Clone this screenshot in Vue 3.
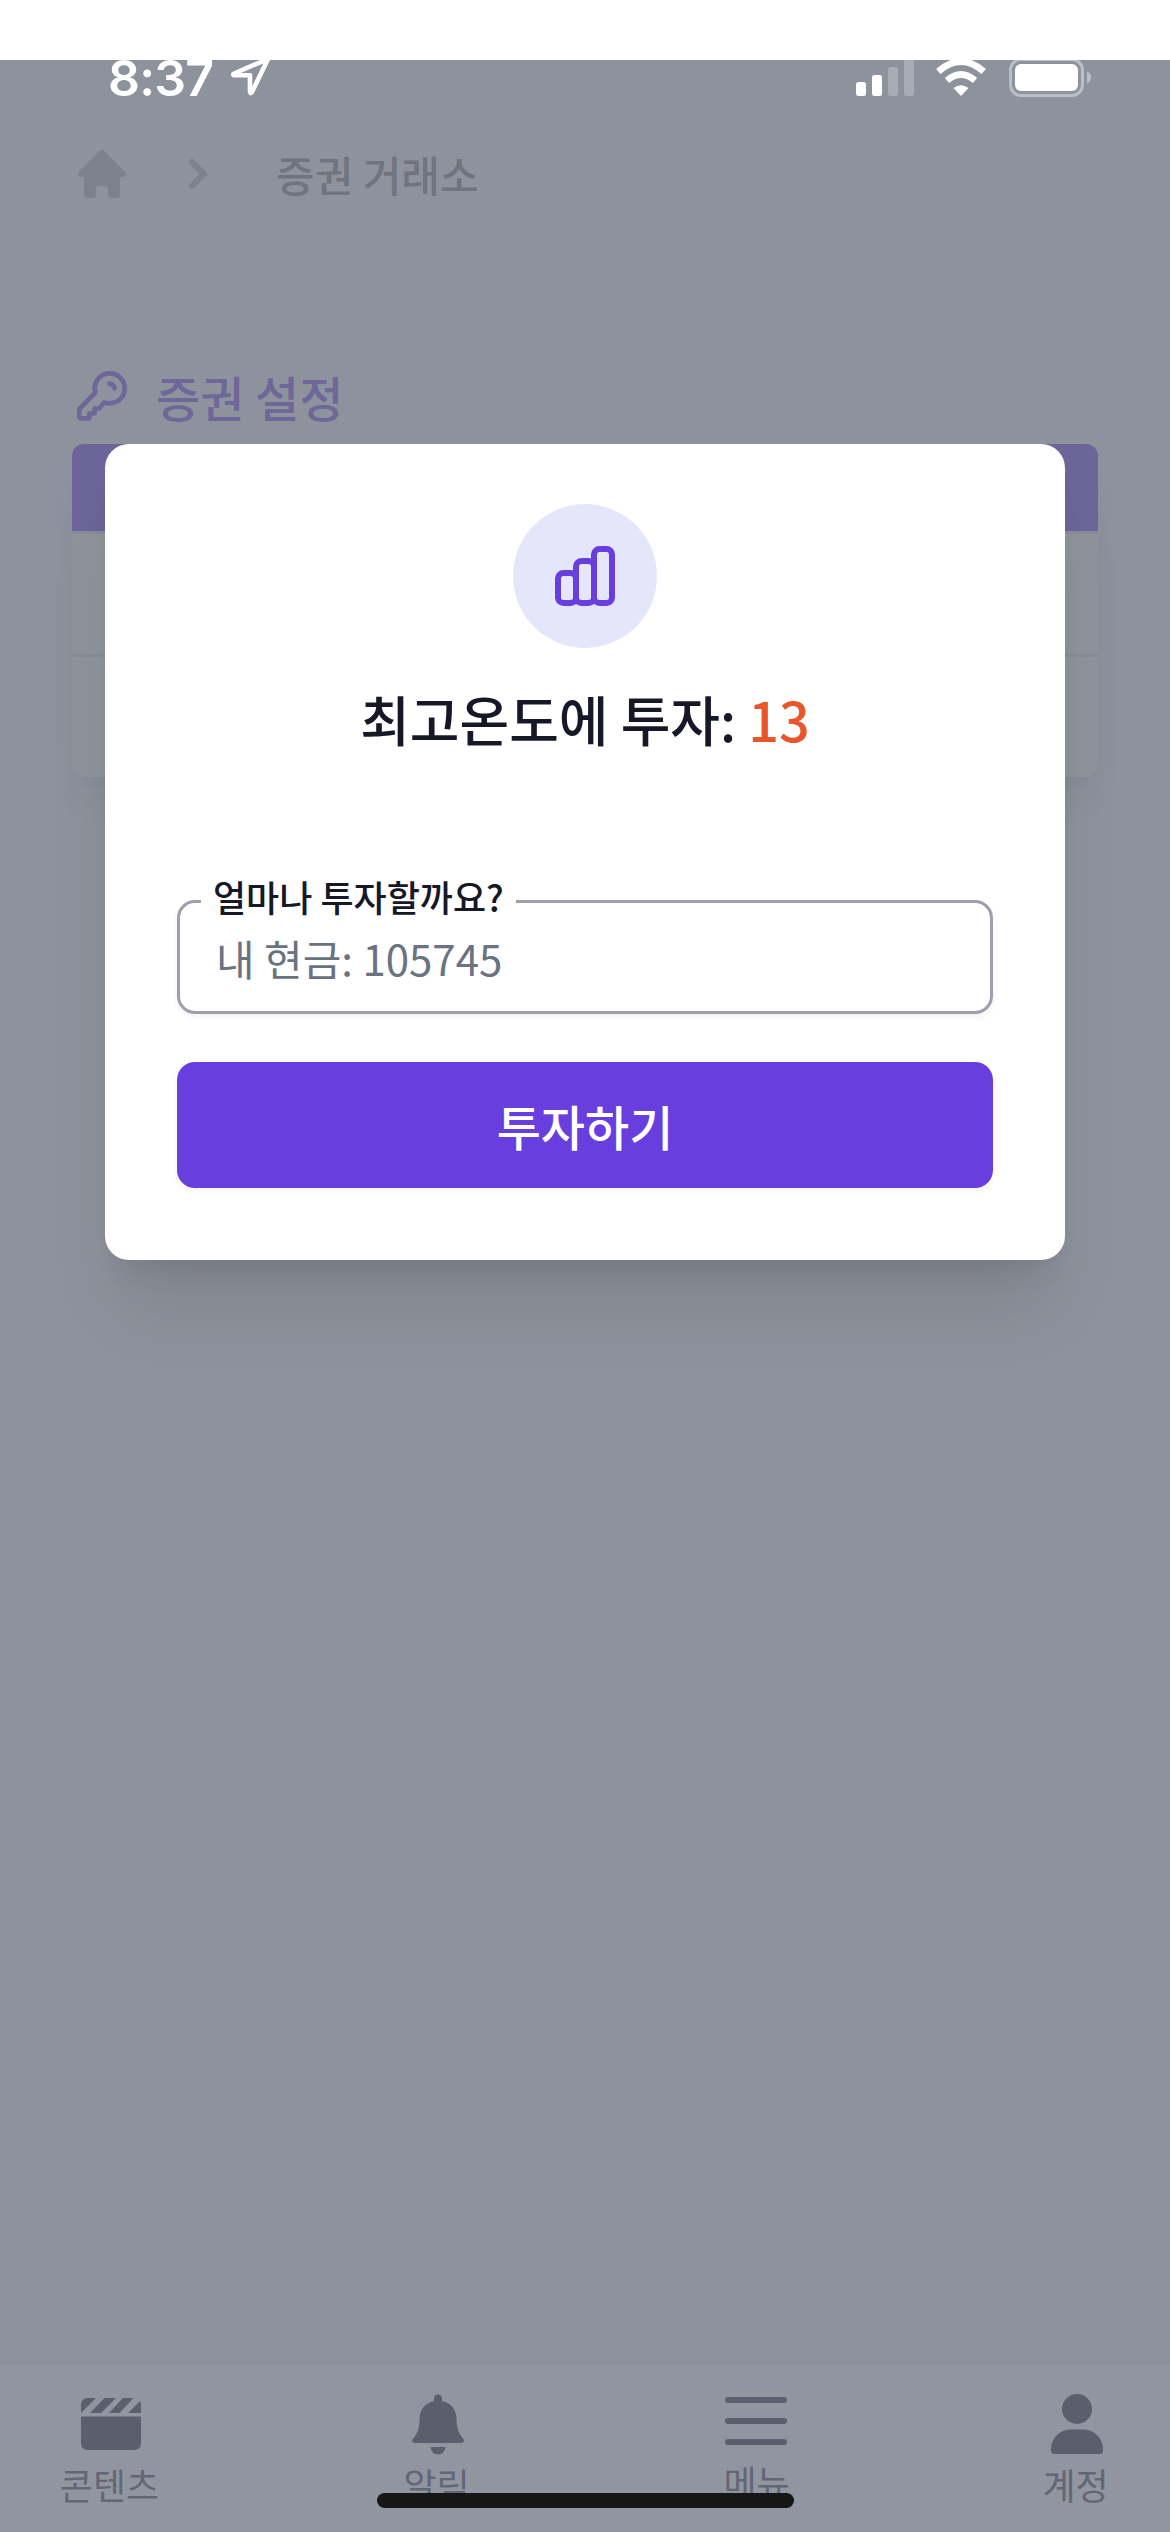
<script setup>
const tabs = [
  { id: 'contents', label: '콘텐츠' },
  { id: 'alarm', label: '알림' },
  { id: 'menu', label: '메뉴' },
  { id: 'account', label: '계정' },
]
</script>

<template>
  <div class="page">
    <div class="top-strip"></div>
    <div class="screen">
      <header class="status">
        <span class="clock">8:37</span>
        <svg class="location" viewBox="0 0 42 42"><path d="M38 3 4 17.500q-1.800 1 0 1.800H20V36q.6 2.200 2 0Z" fill="none" stroke="#fff" stroke-width="4.600" stroke-linejoin="round" /></svg>
        <svg class="signal" viewBox="0 0 58 42">
          <rect x="0" y="28" width="10" height="14" rx="2.500" fill="#fff" />
          <rect x="16" y="21" width="10" height="21" rx="2.500" fill="#fff" />
          <rect x="32" y="13" width="10" height="29" rx="2.500" fill="#a8acb5" />
          <rect x="48" y="3" width="10" height="39" rx="2.500" fill="#a8acb5" />
        </svg>
        <svg class="wifi" viewBox="0 0 50 38">
          <path d="M25 38 17.500 29.900Q25 24.500 32.500 29.900Z" fill="#fff" />
          <path d="M11 22.500Q25 10.500 39 22.500" fill="none" stroke="#fff" stroke-width="6.600" />
          <path d="M2.300 13.500Q25-6.500 47.700 13.500" fill="none" stroke="#fff" stroke-width="6.600" />
        </svg>
        <svg class="battery" viewBox="0 0 82 39">
          <rect x="1.500" y="1.500" width="72" height="36" rx="10.500" fill="none" stroke="#bbbec6" stroke-width="3" />
          <rect x="6" y="6" width="63" height="27" rx="6" fill="#fff" />
          <path d="M78 13.500q4 1.800 4 6t-4 6z" fill="#bbbec6" />
        </svg>
      </header>

      <nav class="crumbs">
        <svg viewBox="0 0 20 20" class="icon home"><path d="M9.293 2.293a1 1 0 011.414 0l7 7A1 1 0 0117 11h-1v6a1 1 0 01-1 1h-2a1 1 0 01-1-1v-2a1 1 0 00-1-1H9a1 1 0 00-1 1v2a1 1 0 01-1 1H5a1 1 0 01-1-1v-6H3a1 1 0 01-.707-1.707l7-7z" /></svg>
        <svg viewBox="0 0 20 20" class="icon chevron"><path d="M7.293 14.707a1 1 0 010-1.414L10.586 10 7.293 6.707a1 1 0 011.414-1.414l4 4a1 1 0 010 1.414l-4 4a1 1 0 01-1.414 0z" /></svg>
        <span class="crumb">증권 거래소</span>
      </nav>

      <div class="heading">
        <svg class="key" viewBox="66 78 180 180" fill="none" stroke="#6f6699" stroke-width="14" stroke-linejoin="round" stroke-linecap="round">
          <path d="M136 158A45 45 0 1 1 163 187L147 206H134V220H118V235H95Q88 235 88 228V211Q88 207 91 204Z" />
          <path d="M178 130Q191 132 194 145" />
        </svg>
        <h2>증권 설정</h2>
      </div>

      <section class="table">
        <div class="table-head"></div>
        <div class="table-row"></div>
        <div class="table-row"></div>
      </section>

      <footer class="tabs">
        <a v-for="tab in tabs" :key="tab.id" class="tab" :class="tab.id">
          <svg v-if="tab.id === 'contents'" class="tab-icon" viewBox="0 0 72 72">
            <path d="M6 28.500H66V55q0 7-7 7H13q-7 0-7-7Z" />
            <path d="M13 10h8L6 25V17q0-7 7-7ZM29.500 10H41L26 25H15ZM48 10h10.500L44.500 25H34ZM65 13l1 3v9H53Z" />
          </svg>
          <svg v-else-if="tab.id === 'alarm'" class="tab-icon" viewBox="0 0 72 72">
            <path d="M36 6.500q3.600 0 4 3.600v3q14.500 3.500 14.500 18.500 0 12 6 18.500 2 2.200 1.600 3-.6 2-3 2H13q-2.600 0-3-2-.4-1 1.600-3 6-6.500 6-18.500Q17.600 16.500 32 13.100v-3q.4-3.600 4-3.600Z" />
            <path d="M28.500 59h15q-1 7.500-7.500 7.500T28.500 59Z" />
          </svg>
          <svg v-else-if="tab.id === 'menu'" class="tab-icon" viewBox="0 0 72 72">
            <rect x="5" y="9" width="62" height="6" rx="3" />
            <rect x="5" y="30" width="62" height="6" rx="3" />
            <rect x="5" y="51" width="62" height="6" rx="3" />
          </svg>
          <svg v-else class="tab-icon" viewBox="0 0 72 72">
            <circle cx="36" cy="21" r="15" />
            <path d="M30 41.500H42C53 41.500 62 50 62 61.500v1q0 3.500-3.500 3.500h-45q-3.500 0-3.500-3.500v-1C10 50 19 41.500 30 41.500Z" />
          </svg>
          <span>{{ tab.label }}</span>
        </a>
      </footer>
    </div>

    <div class="overlay">
      <div class="modal">
        <div class="badge">
          <svg viewBox="0 0 60 60" fill="none" stroke="#693ede" stroke-width="6">
            <rect x="3" y="27" width="18" height="30" rx="5.500" />
            <rect x="21" y="15" width="18" height="42" rx="5.500" />
            <rect x="39" y="3" width="18" height="54" rx="5.500" />
          </svg>
        </div>
        <h3 class="title">최고온도에 투자: <span>13</span></h3>
        <div class="field">
          <label>얼마나 투자할까요?</label>
          <span class="placeholder">내 현금: 105745</span>
        </div>
        <button class="submit">투자하기</button>
      </div>
    </div>
    <div class="home-indicator"></div>
  </div>
</template>

<style>
body {
  margin: 0;
  background: #fff;
}
</style>

<style scoped>
.page {
  position: relative;
  width: 1170px;
  height: 2532px;
  overflow: hidden;
  display: flex;
  flex-direction: column;
  background: #fff;
  font-family: "Noto Sans CJK KR", sans-serif;
}
svg {
  display: block;
  flex: none;
}
.top-strip {
  height: 60px;
  flex: none;
}
.screen {
  flex: 1;
  display: flex;
  flex-direction: column;
  overflow: hidden;
  background: #8e929c;
}
.status {
  display: flex;
  align-items: flex-end;
  height: 38px;
  flex: none;
  padding-left: 108px;
}
.clock {
  width: 122px;
  height: 62px;
  font: 600 50px/62px Inter, sans-serif;
  letter-spacing: -0.8px;
  color: #fff;
  margin-bottom: -11px;
}
.location {
  width: 42px;
  height: 42px;
}
.signal {
  width: 58px;
  height: 42px;
  margin-left: 584px;
  margin-bottom: 2px;
}
.wifi {
  width: 50px;
  height: 38px;
  margin-left: 22px;
  margin-bottom: 2px;
}
.battery {
  width: 82px;
  height: 39px;
  margin-left: 23px;
  margin-bottom: 1px;
}
.crumbs {
  display: flex;
  align-items: center;
  height: 60px;
  flex: none;
  margin-top: 46px;
  padding-left: 72px;
  color: #70747f;
}
.icon {
  width: 60px;
  height: 60px;
  fill: #7d818c;
}
.chevron {
  margin-left: 36px;
}
.crumb {
  margin-left: 48px;
  font-size: 42px;
  line-height: 60px;
  font-weight: 500;
}
.heading {
  display: flex;
  align-items: center;
  height: 72px;
  flex: none;
  margin-top: 156px;
  padding-left: 72px;
}
.key {
  width: 60px;
  height: 60px;
}
h2 {
  margin: 0 0 0 24px;
  font-size: 48px;
  line-height: 72px;
  font-weight: 500;
  color: #6f6699;
}
.table {
  margin: 12px 72px 0;
  flex: none;
  border-radius: 12px;
  overflow: hidden;
  background: #8f939c;
  box-shadow: 0 30px 45px -9px rgba(20, 24, 39, 0.04), 0 12px 18px -12px rgba(20, 24, 39, 0.05);
}
.table-head {
  height: 87px;
  background: #6c6599;
}
.table-row {
  height: 120px;
  border-top: 3px solid #8a8d97;
}
.tabs {
  display: flex;
  align-items: flex-start;
  margin-top: auto;
  height: 168px;
  flex: none;
  border-top: 3px solid #8b8e99;
  background: #9195a0;
  padding-left: 60px;
}
.tab {
  display: flex;
  flex: none;
  flex-direction: column;
  align-items: center;
  width: 72px;
  padding-top: 24px;
  margin-left: 246px;
  color: #636775;
  font-size: 36px;
  line-height: 48px;
  white-space: nowrap;
}
.tab.contents {
  width: 102px;
  margin-left: 0;
}
.tab.alarm {
  margin-left: 240px;
}
.tab.account {
  margin-left: 249px;
}
.tab span {
  margin-right: 3px;
}
.tab.menu span {
  margin-top: -3px;
  margin-right: -1px;
}
.tab-icon {
  width: 72px;
  height: 72px;
  fill: #5b5f6d;
}
.overlay {
  position: absolute;
  inset: 0;
  display: flex;
  justify-content: center;
  align-items: flex-start;
  padding-top: 444px;
}
.modal {
  box-sizing: border-box;
  width: 960px;
  height: 816px;
  padding: 60px 72px 72px;
  border-radius: 24px;
  background: #fff;
  display: flex;
  flex-direction: column;
  align-items: center;
  box-shadow: 0 60px 75px -15px rgba(0, 0, 0, 0.1), 0 24px 30px -18px rgba(0, 0, 0, 0.1);
}
.badge {
  width: 144px;
  height: 144px;
  flex: none;
  border-radius: 50%;
  background: #e6e6fb;
  display: flex;
  align-items: center;
  justify-content: center;
}
.badge svg {
  width: 60px;
  height: 60px;
}
.title {
  margin: 29px 0 0;
  font-size: 54px;
  line-height: 84px;
  font-weight: 500;
  color: #161827;
}
.title span {
  color: #e8562a;
}
.field {
  position: relative;
  box-sizing: border-box;
  width: 816px;
  height: 114px;
  margin-top: 139px;
  border: 3px solid #9e9fae;
  border-radius: 18px;
  padding: 25px 36px;
  display: flex;
  box-shadow: 0 3px 6px rgba(0, 0, 0, 0.05);
}
.field label {
  position: absolute;
  left: 21px;
  top: -31px;
  width: 315px;
  box-sizing: border-box;
  padding-left: 12px;
  background: #fff;
  font-size: 36px;
  line-height: 48px;
  font-weight: 500;
  color: #161827;
  white-space: nowrap;
}
.placeholder {
  font-size: 42px;
  line-height: 60px;
  color: #6b7280;
}
.submit {
  width: 816px;
  height: 126px;
  margin-top: 48px;
  border: 0;
  border-radius: 18px;
  background: #693ede;
  color: #fff;
  font: 500 48px/72px "Noto Sans CJK KR", sans-serif;
  box-shadow: 0 3px 6px rgba(0, 0, 0, 0.05);
}
.home-indicator {
  position: absolute;
  left: 377px;
  bottom: 24px;
  width: 417px;
  height: 15px;
  border-radius: 8px;
  background: #161616;
}
</style>
